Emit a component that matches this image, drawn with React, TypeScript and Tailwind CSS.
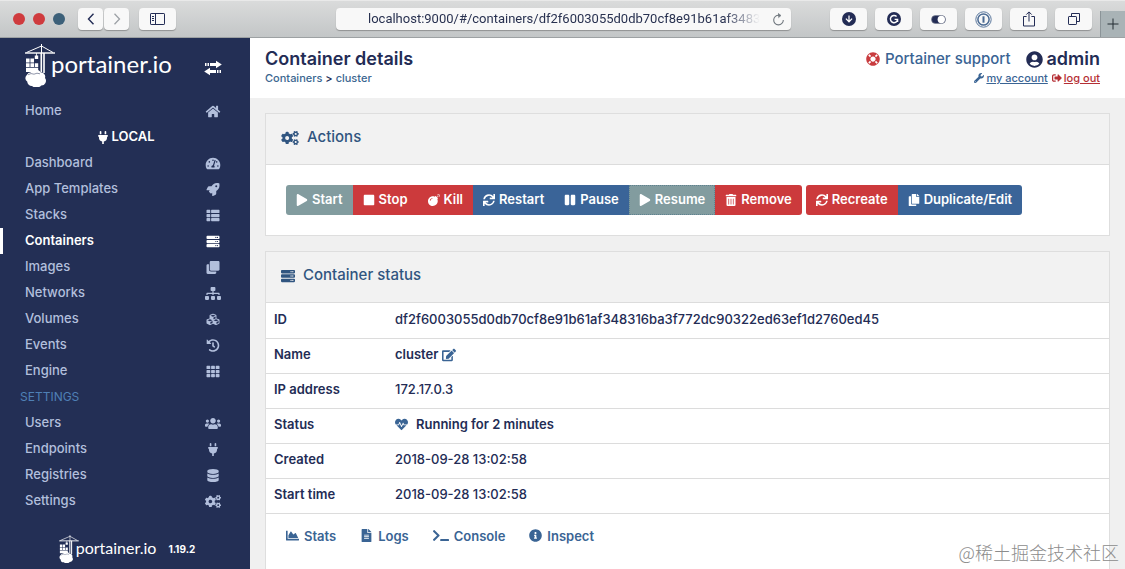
import type { ComponentType, ReactNode } from "react";
import {
  FaArrowDown,
  FaBomb,
  FaChartArea,
  FaClone,
  FaCogs,
  FaCopy,
  FaCubes,
  FaDatabase,
  FaEdit,
  FaFileAlt,
  FaHeartbeat,
  FaHistory,
  FaHome,
  FaInfoCircle,
  FaLifeRing,
  FaPause,
  FaPlay,
  FaPlug,
  FaRocket,
  FaServer,
  FaSignOutAlt,
  FaSitemap,
  FaStop,
  FaSync,
  FaTachometerAlt,
  FaTerminal,
  FaTh,
  FaThList,
  FaTrashAlt,
  FaUserCircle,
  FaUsers,
  FaWrench,
} from "react-icons/fa";

type Icon = ComponentType<{ className?: string }>;

function ToolbarButton({ label, className, children }: { label: string; className: string; children: ReactNode }) {
  return (
    <button
      type="button"
      aria-label={label}
      className={`flex h-[22px] items-center justify-center rounded bg-[#f8f8f8] text-[#232c55] shadow-[0_1px_1px_rgba(0,0,0,0.28)] ${className}`}
    >
      {children}
    </button>
  );
}

function BrowserBar() {
  return (
    <div className="flex h-[38px] shrink-0 items-center border-t border-b border-t-[#e9e9e9] border-b-[#9da1a3] bg-linear-to-b from-[#dadbdb] to-[#c3c6c7] pl-[13px]">
      <div className="flex gap-2">
        <span className="size-3 rounded-full bg-[#cf3b3e]" />
        <span className="size-3 rounded-full bg-[#cf3b3e]" />
        <span className="size-3 rounded-full bg-[#3c6079]" />
      </div>
      <div className="ml-[13px] flex gap-px">
        <ToolbarButton label="Back" className="w-[25px]">
          <svg className="h-3 w-2" viewBox="0 0 8 12" fill="none" stroke="currentColor" strokeWidth="1.4">
            <path d="M6.5 0.8 1.5 6l5 5.2" />
          </svg>
        </ToolbarButton>
        <ToolbarButton label="Forward" className="w-[25px]">
          <svg className="h-3 w-2" viewBox="0 0 8 12" fill="none" stroke="#9da1a6" strokeWidth="1.3">
            <path d="m1.5 0.8 5 5.2-5 5.2" />
          </svg>
        </ToolbarButton>
      </div>
      <ToolbarButton label="Show sidebar" className="ml-[10px] w-[37px]">
        <svg className="h-3 w-[15px]" viewBox="0 0 15 12" fill="none" stroke="currentColor">
          <rect x="0.5" y="0.5" width="14" height="11" rx="0.6" />
          <path d="M5.5 0.5v11M2 3.5h2M2 5.5h2M2 7.5h2" />
        </svg>
      </ToolbarButton>
      <div className="ml-40 flex h-[22px] min-w-0 flex-1 items-center rounded bg-[#f8f8f8] pr-1.5 pl-8 shadow-[0_1px_1px_rgba(0,0,0,0.28)]">
        <input
          aria-label="Address"
          readOnly
          value="localhost:9000/#/containers/df2f6003055d0db70cf8e91b61af34831"
          className="min-w-0 flex-1 bg-transparent font-['Roboto',sans-serif] text-[13px] text-[#283150] outline-none [mask-image:linear-gradient(to_right,black_88%,transparent_97%)]"
        />
        <button type="button" aria-label="Reload" className="text-[#71787f]">
          <svg className="size-[13px]" viewBox="0 0 13 13" fill="none" stroke="currentColor" strokeWidth="1.1">
            <path d="M7 2.3A4.8 4.8 0 1 0 11.3 7" />
            <path d="M6 .3 9 2.5 6.4 4.8" fill="currentColor" strokeWidth="0.6" />
          </svg>
        </button>
      </div>
      <div className="ml-[39px] flex gap-2">
        <ToolbarButton label="Downloads" className="w-[37px]">
          <span className="flex size-3.5 items-center justify-center rounded-full bg-[#232c55] text-white">
            <FaArrowDown className="size-2" />
          </span>
        </ToolbarButton>
        <ToolbarButton label="Grammar check" className="w-[37px]">
          <svg className="size-3.5" viewBox="0 0 14 14">
            <circle cx="7" cy="7" r="7" fill="#232c55" />
            <path d="M9.6 4.6A3.6 3.6 0 1 0 10.6 7.4H7.6M10.6 7.4v2.6" fill="none" stroke="#fff" strokeWidth="1.4" />
          </svg>
        </ToolbarButton>
        <ToolbarButton label="Dark mode" className="w-[37px]">
          <svg className="h-[9px] w-[15px]" viewBox="0 0 15 9">
            <rect x="0.5" y="0.5" width="14" height="8" rx="4" fill="#232c55" stroke="#777d90" strokeWidth="0.6" />
            <circle cx="10.3" cy="4.5" r="3.7" fill="#fff" />
          </svg>
        </ToolbarButton>
        <ToolbarButton label="Passwords" className="w-[37px]">
          <svg className="size-[17px]" viewBox="0 0 17 17" fill="none" stroke="#4a6a93">
            <circle cx="8.5" cy="8.5" r="7.7" strokeWidth="0.9" />
            <circle cx="8.5" cy="8.5" r="5.6" strokeWidth="1.5" />
            <path d="M8.5 5.3v6.4" strokeWidth="2" />
          </svg>
        </ToolbarButton>
        <ToolbarButton label="Share" className="w-[37px]">
          <svg className="h-4 w-3" viewBox="0 0 12 16" fill="none" stroke="currentColor">
            <path d="M3.6 5.5H.5v9.5h11V5.5H8.4M6 10.5V1M3.3 3.6 6 .9l2.7 2.7" />
          </svg>
        </ToolbarButton>
        <ToolbarButton label="Show tabs" className="w-[37px]">
          <svg className="size-3" viewBox="0 0 12 12" fill="none" stroke="currentColor">
            <path d="M3.5 3V.5h8v8H9" />
            <rect x="0.5" y="3.5" width="8" height="8" rx="0.6" />
          </svg>
        </ToolbarButton>
      </div>
      <button
        type="button"
        aria-label="New tab"
        className="ml-2 flex h-[26px] w-[25px] items-center justify-center self-end border-l border-[#8b9498] bg-[#a9b3b6] text-[#232c33]"
      >
        <svg className="size-3" viewBox="0 0 12 12" stroke="currentColor" strokeWidth="1">
          <path d="M6 0.5v11M0.5 6h11" />
        </svg>
      </button>
    </div>
  );
}

function Crane({ className }: { className: string }) {
  return (
    <svg className={className} viewBox="0 0 30 43" fill="none" stroke="#fff" aria-hidden="true">
      <path d="M0 9h30" strokeWidth="1.4" />
      <path d="M1.5 8.5 16.5 2l11.5 6.5M16.5 0v9" strokeWidth="1" />
      <path d="M16.3 9v19M19 9v20" strokeWidth="1.6" />
      <path d="M11.5 9v5" strokeWidth="0.8" />
      <g fill="#fff" stroke="none">
        <path d="M1 14.5h3.6v4H1zM5.4 14.5H9v4H5.4zM9.8 11.5h3.4v3.4H9.8zM1 19.3h3.6v3.6H1zM5.4 19.3H9v3.6H5.4zM9.8 19.3h3.4v3.6H9.8zM1 23.7h12.2V28H1z" />
        <path d="M6 28.3a5.5 5.5 0 0 1 9.5 0 4.4 4.4 0 0 1 4.5 5.7 4.6 4.6 0 0 1-3.8 7.4A6.5 6.5 0 0 1 7 42a4.6 4.6 0 0 1-4.8-4.4A4.2 4.2 0 0 1 1.8 31 4.6 4.6 0 0 1 6 28.3z" />
      </g>
      <path d="M3 30.8q3-2.2 6-.6 3-1.8 6-.4" stroke="#232f55" strokeWidth="0.5" />
    </svg>
  );
}

const endpointLinks: { label: string; icon: Icon; active?: boolean }[] = [
  { label: "Dashboard", icon: FaTachometerAlt },
  { label: "App Templates", icon: FaRocket },
  { label: "Stacks", icon: FaThList },
  { label: "Containers", icon: FaServer, active: true },
  { label: "Images", icon: FaClone },
  { label: "Networks", icon: FaSitemap },
  { label: "Volumes", icon: FaCubes },
  { label: "Events", icon: FaHistory },
  { label: "Engine", icon: FaTh },
];

const settingsLinks: { label: string; icon: Icon }[] = [
  { label: "Users", icon: FaUsers },
  { label: "Endpoints", icon: FaPlug },
  { label: "Registries", icon: FaDatabase },
  { label: "Settings", icon: FaCogs },
];

function NavItem({ label, icon: IconMark, active = false }: { label: string; icon: Icon; active?: boolean }) {
  return (
    <li>
      <a
        href="#"
        className={`flex h-[26px] items-center justify-between border-l-3 pr-[29px] pl-[22px] text-[13px] ${
          active ? "border-white font-semibold text-white" : "border-transparent font-medium text-[#b2bfdc]"
        }`}
      >
        {label}
        <IconMark className="h-[13px] w-4" />
      </a>
    </li>
  );
}

function Sidebar() {
  return (
    <nav className="flex w-[250px] shrink-0 flex-col bg-[#232f55]">
      <div className="flex h-[60px] shrink-0 items-start pt-1.5 pr-7 pl-[25px]">
        <Crane className="h-[43px] w-[30px]" />
        <span className="ml-[-4px] flex-1 pt-2 font-['Lato',sans-serif] text-[24px] leading-6 text-white">portainer.io</span>
        <button type="button" aria-label="Toggle sidebar" className="pt-4 text-white">
          <svg className="h-4 w-[18px]" viewBox="0 0 18 16" fill="currentColor">
            <path d="M1 3h1.5v3H1zM3.5 3H5v3H3.5zM6 3h6V.8L17.8 4.5 12 8.2V6H6zM17 10h-1.5v3H17zM14.5 10H13v3h1.5zM12 10H6V7.8L.2 11.5 6 15.2V13h6z" />
          </svg>
        </button>
      </div>
      <ul>
        <NavItem label="Home" icon={FaHome} />
        <li className="flex h-[26px] items-center justify-center text-[13px] font-semibold text-white">
          <FaPlug className="h-[13px] w-4" />
          LOCAL
        </li>
        {endpointLinks.map((link) => (
          <NavItem key={link.label} {...link} />
        ))}
        <li className="flex h-[26px] items-center pl-5 text-[12px] text-[#4f80b5]">SETTINGS</li>
        {settingsLinks.map((link) => (
          <NavItem key={link.label} {...link} />
        ))}
      </ul>
      <div className="mt-auto mb-[6px] flex items-center justify-center pl-1">
        <Crane className="h-7 w-5" />
        <span className="ml-[-3px] pb-0.5 font-['Lato',sans-serif] text-[16px] leading-none text-white">portainer.io</span>
        <span className="ml-3 text-[10px] font-bold text-white">1.19.2</span>
      </div>
    </nav>
  );
}

function PageHeader() {
  return (
    <header className="flex h-[60px] shrink-0 justify-between bg-white px-[15px] pt-[10px] pr-[25px]">
      <div>
        <h1 className="text-[18px] leading-[22px] font-semibold text-[#232c55]">Container details</h1>
        <div className="text-[11px] leading-4 font-medium text-[#232c55]">
          <a href="#" className="text-[#3a6690]">Containers</a> &gt; <a href="#" className="text-[#3a6690]">cluster</a>
        </div>
      </div>
      <div className="flex flex-col items-end">
        <div className="flex items-center leading-[22px]">
          <a href="#" className="flex items-center gap-[5px] text-[15px] font-medium text-[#3a6494]">
            <FaLifeRing className="size-3.5 text-[#c93c3f]" />
            Portainer support
          </a>
          <span className="ml-[15px] flex items-center gap-1 text-[18px] font-semibold text-[#232c55]">
            <FaUserCircle className="size-[17px]" />
            admin
          </span>
        </div>
        <div className="flex gap-1 text-[11px] leading-4 font-medium">
          <a href="#" className="flex items-center gap-0.5 text-[#3a6494]">
            <FaWrench className="size-2.5" />
            <span className="underline">my account</span>
          </a>
          <a href="#" className="flex items-center gap-0.5 text-[#b52f35]">
            <FaSignOutAlt className="size-2.5" />
            <span className="underline">log out</span>
          </a>
        </div>
      </div>
    </header>
  );
}

function CardTitle({ icon, children }: { icon: ReactNode; children: ReactNode }) {
  return (
    <h2 className="flex h-[51px] items-center gap-2 border-b border-[#dcdcdc] bg-[#f2f2f2] px-[15px] pb-[3px] text-[15px] font-medium text-[#305580]">
      {icon}
      {children}
    </h2>
  );
}

function ActionButton({ icon: IconMark, tone, children }: { icon: Icon; tone: string; children: string }) {
  return (
    <button
      type="button"
      className={`flex h-[30px] items-center gap-1 px-[10px] text-[13px] font-semibold text-white first:rounded-l-[3px] last:rounded-r-[3px] ${tone}`}
    >
      <IconMark className="size-3" />
      {children}
    </button>
  );
}

function ActionsCard() {
  const muted = "bg-[#829c9f]";
  const red = "bg-[#cc3a3c]";
  const blue = "bg-[#3a6498]";
  return (
    <section className="border border-[#dedede] bg-white">
      <CardTitle icon={<FaCogs className="h-3.5 w-[18px]" />}>Actions</CardTitle>
      <div className="flex gap-1 px-5 py-5">
        <div className="flex">
          <ActionButton icon={FaPlay} tone={muted}>Start</ActionButton>
          <ActionButton icon={FaStop} tone={red}>Stop</ActionButton>
          <ActionButton icon={FaBomb} tone={red}>Kill</ActionButton>
          <ActionButton icon={FaSync} tone={blue}>Restart</ActionButton>
          <ActionButton icon={FaPause} tone={blue}>Pause</ActionButton>
          <ActionButton
            icon={FaPlay}
            tone="bg-[#829c9f] outline outline-dotted -outline-offset-1 outline-[#5f8290]"
          >
            Resume
          </ActionButton>
          <ActionButton icon={FaTrashAlt} tone={red}>Remove</ActionButton>
        </div>
        <div className="flex">
          <ActionButton icon={FaSync} tone={red}>Recreate</ActionButton>
          <ActionButton icon={FaCopy} tone={blue}>Duplicate/Edit</ActionButton>
        </div>
      </div>
    </section>
  );
}

const details: { label: string; value: ReactNode }[] = [
  { label: "ID", value: "df2f6003055d0db70cf8e91b61af348316ba3f772dc90322ed63ef1d2760ed45" },
  {
    label: "Name",
    value: (
      <span className="flex items-center gap-1 font-semibold">
        cluster
        <button type="button" aria-label="Edit name" className="text-[#3a6494]">
          <FaEdit className="size-3.5" />
        </button>
      </span>
    ),
  },
  { label: "IP address", value: "172.17.0.3" },
  {
    label: "Status",
    value: (
      <span className="flex items-center gap-2 font-semibold">
        <FaHeartbeat className="size-[13px] text-[#3a6494]" />
        Running for 2 minutes
      </span>
    ),
  },
  { label: "Created", value: "2018-09-28 13:02:58" },
  { label: "Start time", value: "2018-09-28 13:02:58" },
];

const tools: { label: string; icon: ReactNode }[] = [
  { label: "Stats", icon: <FaChartArea className="size-[13px]" /> },
  { label: "Logs", icon: <FaFileAlt className="size-[13px]" /> },
  { label: "Console", icon: <FaTerminal className="h-[13px] w-4" /> },
  { label: "Inspect", icon: <FaInfoCircle className="size-[13px]" /> },
];

function StatusCard() {
  return (
    <section className="flex-1 border border-[#dedede] bg-white">
      <CardTitle icon={<FaServer className="size-3.5" />}>Container status</CardTitle>
      <table className="w-full table-fixed border-collapse text-left text-[13px] font-medium text-[#232c55]">
        <tbody>
          {details.map((row) => (
            <tr key={row.label} className="h-[35px] border-b border-[#dcdcdc]">
              <th scope="row" className="w-[121px] px-2 pb-0.5 font-semibold">{row.label}</th>
              <td className="px-2 pb-0.5">{row.value}</td>
            </tr>
          ))}
        </tbody>
      </table>
      <div className="flex gap-6 px-5 pt-3 pb-8">
        {tools.map(({ label, icon }) => (
          <a key={label} href="#" className="flex items-center gap-[5px] text-[13px] leading-5 font-semibold text-[#3a6494]">
            {icon}
            {label}
          </a>
        ))}
      </div>
    </section>
  );
}

export default function App() {
  return (
    <div className="relative flex h-screen flex-col overflow-hidden font-['Inter',sans-serif]">
      <BrowserBar />
      <div className="flex min-h-0 flex-1">
        <Sidebar />
        <div className="flex min-w-0 flex-1 flex-col bg-[#f0f0f0]">
          <PageHeader />
          <main className="flex min-h-0 flex-1 flex-col gap-[15px] p-[15px] pb-0">
            <ActionsCard />
            <StatusCard />
          </main>
        </div>
      </div>
      <div className="pointer-events-none absolute right-[6px] bottom-[3px] font-['Noto_Sans_CJK_SC',sans-serif] text-[18px] leading-7 font-light text-[#8c8c8c]">
        @稀土掘金技术社区
      </div>
    </div>
  );
}
